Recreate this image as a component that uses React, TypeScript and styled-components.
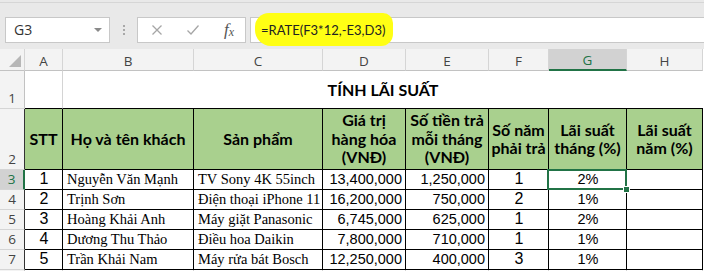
import React from "react";
import styled, { createGlobalStyle } from "styled-components";

const GlobalStyle = createGlobalStyle`
html, body {
  margin: 0;
  padding: 0;
}
body {
  width: 704px;
  height: 271px;
  overflow: hidden;
  background: #e9e9e9;
}
`;

const GREEN = "#217346";
const HEADER_GREEN = "#a9d08e";

const columns = ["A", "B", "C", "D", "E", "F", "G", "H"];

const rows = [
    { stt: "1", name: "Nguyễn Văn Mạnh", product: "TV Sony 4K 55inch", price: "13,400,000", monthly: "1,250,000", years: "1", rate: "2%" },
    { stt: "2", name: "Trịnh Sơn", product: "Điện thoại iPhone 11", price: "16,200,000", monthly: "750,000", years: "2", rate: "1%" },
    { stt: "3", name: "Hoàng Khải Anh", product: "Máy giặt Panasonic", price: "6,745,000", monthly: "625,000", years: "1", rate: "2%" },
    { stt: "4", name: "Dương Thu Thảo", product: "Điều hoa Daikin", price: "7,800,000", monthly: "710,000", years: "1", rate: "1%" },
    { stt: "5", name: "Trần Khải Nam", product: "Máy rửa bát Bosch", price: "12,250,000", monthly: "400,000", years: "3", rate: "1%" },
];

const headers = [
    ["STT"],
    ["Họ và tên khách"],
    ["Sản phẩm"],
    ["Giá trị", "hàng hóa", "(VNĐ)"],
    ["Số tiền trả", "mỗi tháng", "(VNĐ)"],
    ["Số năm", "phải trả"],
    ["Lãi suất", "tháng (%)"],
    ["Lãi suất", "năm (%)"],
];

const App = () => {
    return (
        <Page>
            <GlobalStyle />
            <FormulaBar>
                <NameBox>
                    <span>G3</span>
                    <DropArrow />
                </NameBox>
                <Grip>
                    <i />
                    <i />
                    <i />
                </Grip>
                <FunctionBox>
                    <svg width="12" height="12" viewBox="0 0 12 12">
                        <path d="M1.5 1.5 L10.5 10.5 M10.5 1.5 L1.5 10.5" stroke="#a6a6a6" strokeWidth="1.3" fill="none" />
                    </svg>
                    <svg width="14" height="12" viewBox="0 0 14 12">
                        <path d="M1.5 6.5 L5 10 L12.5 1.5" stroke="#a6a6a6" strokeWidth="1.3" fill="none" />
                    </svg>
                    <Fx>
                        f<sub>x</sub>
                    </Fx>
                </FunctionBox>
                <FormulaInput>
                    <Highlight>=RATE(F3*12,-E3,D3)</Highlight>
                </FormulaInput>
            </FormulaBar>

            <Sheet>
                <Corner>
                    <svg width="12" height="12" viewBox="0 0 12 12">
                        <path d="M12 0 L12 12 L0 12 Z" fill="#b7b7b7" />
                    </svg>
                </Corner>
                {columns.map((c) => (
                    <ColHeader key={c} $active={c === "G"}>{c}</ColHeader>
                ))}

                {/* row 1 */}
                <RowHeader>1</RowHeader>
                <Cell $dark="bottom" />
                <TitleCell>TÍNH LÃI SUẤT</TitleCell>

                {/* row 2 */}
                <RowHeader $tableEdge>2</RowHeader>
                {headers.map((lines, i) => (
                    <HeadCell key={i}>
                        {lines.map((l) => (
                            <div key={l}>{l}</div>
                        ))}
                    </HeadCell>
                ))}

                {rows.map((r, i) => (
                    <React.Fragment key={r.stt}>
                        <RowHeader $tableEdge $active={i === 0}>{i + 3}</RowHeader>
                        <DataCell $align="center" $font="sans" $big>{r.stt}</DataCell>
                        <DataCell $align="left" $font="serif">{r.name}</DataCell>
                        <DataCell $align="left" $font="serif">{r.product}</DataCell>
                        <DataCell $align="right" $font="sans">{r.price}</DataCell>
                        <DataCell $align="right" $font="sans">{r.monthly}</DataCell>
                        <DataCell $align="center" $font="sans" $big>{r.years}</DataCell>
                        <DataCell $align="center" $font="sans" $selected={i === 0}>{r.rate}</DataCell>
                        <DataCell $align="center" $font="sans" />
                    </React.Fragment>
                ))}

                {/* row 8, only its top edge shows */}
                <RowHeader />
                {columns.map((c) => (
                    <Cell key={c} />
                ))}
            </Sheet>
        </Page>
    );
};

export default App;

const Page = styled.div`
display: flex;
flex-direction: column;
width: 704px;
height: 271px;
overflow: hidden;
background: #e9e9e9;
`;

const FormulaBar = styled.div`
display: flex;
align-items: center;
height: 47px;
box-sizing: border-box;
padding: 14px 0 7px 5px;
border-top: 1px solid #d6d6d6;
margin-top: 2px;
`;

const Box = styled.div`
height: 26px;
box-sizing: border-box;
background: #fff;
border: 1px solid #c8c8c8;
display: flex;
align-items: center;
`;

const NameBox = styled(Box)`
width: 105px;
padding: 0 7px 0 8px;
justify-content: space-between;
font-family: "Open Sans", "Noto Sans", sans-serif;
font-size: 14px;
color: #333;
`;

const DropArrow = styled.span`
width: 0;
height: 0;
border-left: 4px solid transparent;
border-right: 4px solid transparent;
border-top: 4px solid #8a8a8a;
`;

const Grip = styled.div`
width: 27px;
display: flex;
flex-direction: column;
align-items: center;
gap: 2px;

i {
  display: block;
  width: 2px;
  height: 2px;
  background: #a8a8a8;
}
`;

const FunctionBox = styled(Box)`
width: 109px;
padding: 0 11px 0 13px;
justify-content: space-between;
`;

const Fx = styled.span`
font-family: "Liberation Serif", serif;
font-style: italic;
font-size: 17px;
color: #555;
line-height: 1;

sub {
  font-size: 12px;
  vertical-align: -1px;
}
`;

const FormulaInput = styled(Box)`
flex: 1;
margin-left: 4px;
padding-left: 4px;
border-right: none;
overflow: visible;
`;

const Highlight = styled.span`
display: inline-block;
background: #ffff14;
padding: 8px 8px 7px 6px;
border-radius: 14px 10px 12px 16px;
font-family: Lato, "Liberation Sans", sans-serif;
font-size: 13px;
color: #222;
line-height: 18px;
`;

const Sheet = styled.div`
display: grid;
grid-template-columns: 25px 38px 131px 129px 83px 83px 60px 78px 76px;
grid-template-rows: 22px 38px 61px repeat(5, 20px) 20px;
background: #fff;
`;

const HeaderBase = styled.div`
box-sizing: border-box;
background: #f3f3f3;
font-family: "Open Sans", "Noto Sans", sans-serif;
font-size: 13.5px;
color: #444;
`;

const Corner = styled(HeaderBase)`
display: flex;
align-items: flex-end;
justify-content: flex-end;
padding: 0 3px 3px 0;
border-right: 1px solid #d5d5d5;
border-bottom: 1px solid #c2c2c2;
`;

const ColHeader = styled(HeaderBase)<{ $active?: boolean }>`
display: flex;
align-items: center;
justify-content: center;
padding-top: 2px;
border-right: 1px solid #d5d5d5;
border-bottom: ${(p) => (p.$active ? `2px solid ${GREEN}` : "1px solid #c2c2c2")};
background: ${(p) => (p.$active ? "#d2d2d2" : "#f3f3f3")};
color: ${(p) => (p.$active ? GREEN : "#444")};
`;

const RowHeader = styled(HeaderBase)<{ $active?: boolean; $tableEdge?: boolean }>`
display: flex;
align-items: flex-end;
justify-content: center;
padding-bottom: 1px;
border-bottom: 1px solid #d5d5d5;
border-right: ${(p) =>
    p.$active ? `2px solid ${GREEN}` : p.$tableEdge ? "1px solid #333" : "1px solid #c2c2c2"};
background: ${(p) => (p.$active ? "#d2d2d2" : "#f3f3f3")};
color: ${(p) => (p.$active ? GREEN : "#444")};
`;

const Cell = styled.div<{ $dark?: "bottom" }>`
box-sizing: border-box;
border-right: 1px solid #d4d4d4;
border-bottom: 1px solid ${(p) => (p.$dark ? "#000" : "#d4d4d4")};
`;

const TitleCell = styled.div`
grid-column: 3 / 10;
box-sizing: border-box;
display: flex;
align-items: center;
justify-content: center;
border-bottom: 1px solid #000;
font-family: Lato, "Liberation Sans", sans-serif;
font-weight: 700;
font-size: 16px;
color: #000;
`;

const HeadCell = styled.div`
box-sizing: border-box;
display: flex;
flex-direction: column;
align-items: center;
justify-content: center;
background: ${HEADER_GREEN};
border-right: 1px solid #000;
border-bottom: 1px solid #000;
font-family: Lato, "Liberation Sans", sans-serif;
font-weight: 700;
font-size: 16px;
line-height: 18.5px;
color: #000;
white-space: nowrap;
text-align: center;
`;

const DataCell = styled.div<{
    $align: "left" | "center" | "right";
    $font: "sans" | "serif";
    $big?: boolean;
    $selected?: boolean;
}>`
position: relative;
box-sizing: border-box;
display: flex;
align-items: flex-end;
justify-content: ${(p) => (p.$align === "left" ? "flex-start" : p.$align === "right" ? "flex-end" : "center")};
padding: 0 3px 1px 4px;
border-right: 1px solid #000;
border-bottom: 1px solid #000;
white-space: nowrap;
font-family: ${(p) => (p.$font === "serif" ? `"Liberation Serif", serif` : `"Liberation Sans", sans-serif`)};
font-size: ${(p) => (p.$big ? "16px" : "14.5px")};
line-height: 18px;
color: #000;

${(p) =>
    p.$selected &&
    `
&::before {
  content: "";
  position: absolute;
  left: -2px;
  top: -1px;
  right: -1px;
  bottom: -1px;
  border: 2px solid ${GREEN};
}
&::after {
  content: "";
  position: absolute;
  right: -4px;
  bottom: -4px;
  width: 5px;
  height: 5px;
  background: ${GREEN};
  border: 1px solid #fff;
  z-index: 1;
}
`}
`;
